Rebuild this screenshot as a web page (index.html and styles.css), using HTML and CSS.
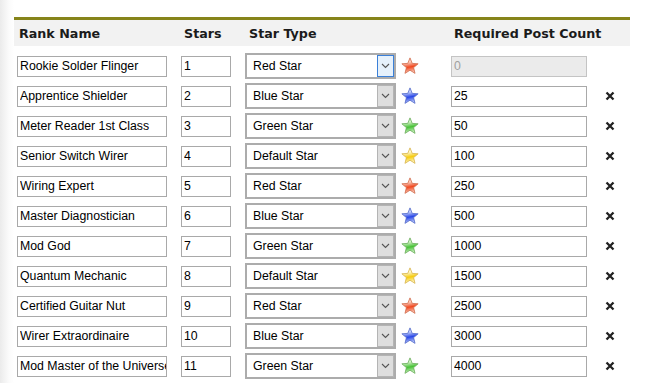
FILE: index.html
```html
<!DOCTYPE html>
<html lang="en">
<head>
  <meta charset="UTF-8" />
  <title>Ranks</title>
  <link rel="stylesheet" href="styles.css">
</head>
<body>
  <table class="ranks">
    <colgroup>
      <col class="c-name"><col class="c-stars"><col class="c-type"><col class="c-icon"><col class="c-posts"><col class="c-del">
    </colgroup>
    <thead>
      <tr>
        <th>Rank Name</th>
        <th>Stars</th>
        <th class="th-type">Star Type</th>
        <th></th>
        <th>Required Post Count</th>
        <th></th>
      </tr>
    </thead>
    <tbody id="rows"></tbody>
  </table>

  <script>
    const ranks = [
      ['Rookie Solder Flinger', 1, 'red', 0],
      ['Apprentice Shielder', 2, 'blue', 25],
      ['Meter Reader 1st Class', 3, 'green', 50],
      ['Senior Switch Wirer', 4, 'default', 100],
      ['Wiring Expert', 5, 'red', 250],
      ['Master Diagnostician', 6, 'blue', 500],
      ['Mod God', 7, 'green', 1000],
      ['Quantum Mechanic', 8, 'default', 1500],
      ['Certified Guitar Nut', 9, 'red', 2500],
      ['Wirer Extraordinaire', 10, 'blue', 3000],
      ['Mod Master of the Universe', 11, 'green', 4000]
    ];

    const types = { red: 'Red Star', blue: 'Blue Star', green: 'Green Star', default: 'Default Star' };
    const colors = {
      red: ['#fcd0c0', '#f04a22', '#d06a4a'],
      blue: ['#c4d0fb', '#2a48e8', '#5068c8'],
      green: ['#d4f4c8', '#48c238', '#68ac58'],
      default: ['#fff8d0', '#f6cc10', '#d8b448']
    };

    const rows = document.getElementById('rows');

    function star(type, i) {
      const [top, bottom, edge] = colors[type];
      return `<svg class="star" width="18" height="18" viewBox="0 0 20 20">
        <defs><linearGradient id="g${i}" x1="0.2" y1="0" x2="0.4" y2="1">
          <stop offset="0" stop-color="${top}"/><stop offset="0.3" stop-color="${top}"/><stop offset="0.62" stop-color="${bottom}"/><stop offset="1" stop-color="${top}"/>
        </linearGradient></defs>
        <polygon points="10,1 12.47,7.1 19.03,7.56 13.99,11.8 15.58,18.19 10,14.7 4.42,18.19 6.01,11.8 0.97,7.56 7.53,7.1"
          fill="url(#g${i})" stroke="${edge}" stroke-width="0.9" stroke-linejoin="round"/>
      </svg>`;
    }

    ranks.forEach(([name, stars, type, posts], i) => {
      const tr = document.createElement('tr');
      const options = Object.keys(types).map(k =>
        `<option value="${k}"${k === type ? ' selected' : ''}>${types[k]}</option>`).join('');
      tr.innerHTML = `
        <td><input class="field name" type="text" value="${name}"></td>
        <td><input class="field stars" type="text" value="${stars}"></td>
        <td>
          <span class="dropdown${i === 0 ? ' focus' : ''}">
            <select>${options}</select>
            <span class="arrow"><svg width="9" height="6" viewBox="0 0 9 6"><path d="M1 1l3.5 3.5L8 1" fill="none" stroke="#555" stroke-width="1.1"/></svg></span>
          </span>
        </td>
        <td>${star(type, i)}</td>
        <td><input class="field posts" type="text" value="${posts}"${i === 0 ? ' disabled' : ''}></td>
        <td>${i === 0 ? '' : '<svg class="del" width="10" height="10" viewBox="0 0 10 10"><path d="M1.5 1.5l7 7M8.5 1.5l-7 7" stroke="#222" stroke-width="2.3"/></svg>'}</td>
      `;
      rows.appendChild(tr);
    });
  </script>
</body>
</html>
```

FILE: styles.css
```css
body {
  margin: 0;
  padding: 17px 0 0 14px;
  background: linear-gradient(to right, #ebebeb 0, #fbfbfb 9px, #fff 14px);
  font-family: "Liberation Sans", Arial, sans-serif;
  font-size: 12.3px;
  color: #000;
}
.ranks {
  border-collapse: collapse;
  table-layout: fixed;
  width: 616px;
  border-top: 3px solid #86841a;
}
.c-name { width: 164px; }
.c-stars { width: 64px; }
.c-type { width: 156px; }
.c-icon { width: 50px; }
.c-posts { width: 142px; }
.c-del { width: 40px; }
th {
  background: #f2f2f2;
  height: 26px;
  padding: 0 0 0 6px;
  text-align: left;
  font-family: "DejaVu Sans", Verdana, sans-serif;
  font-size: 12.7px;
  font-weight: bold;
  color: #1b1b1b;
  white-space: nowrap;
}
th:first-child { padding-left: 5px; }
.th-type { padding-left: 7px; }
td {
  padding: 2px 3px;
  vertical-align: middle;
  line-height: 0;
}
tbody tr:first-child td { padding-top: 7px; }
.field {
  box-sizing: border-box;
  height: 21px;
  margin: 0;
  padding: 0 0 0 2px;
  border: 1px solid #a9a9a9;
  background: #fff;
  font-family: "Liberation Sans", Arial, sans-serif;
  font-size: 12.3px;
  color: #000;
  vertical-align: middle;
}
.field.name { width: 150px; }
.field.stars { width: 50px; }
.field.posts { width: 136px; }
.field:disabled {
  background: #ebebeb;
  border-color: #c4c4c4;
  color: #a0a0a0;
}
.dropdown {
  box-sizing: border-box;
  display: inline-flex;
  width: 151px;
  height: 26px;
  border: 2px solid #acacac;
  background: #fff;
  vertical-align: middle;
}
.dropdown select {
  flex: 1;
  min-width: 0;
  border: none;
  outline: none;
  appearance: none;
  -webkit-appearance: none;
  background: transparent;
  padding: 0 0 0 6px;
  font-family: "Liberation Sans", Arial, sans-serif;
  font-size: 12.3px;
  color: #000;
}
.arrow {
  box-sizing: border-box;
  display: flex;
  align-items: center;
  justify-content: center;
  width: 17px;
  border: 1px solid #b4b4b4;
  background: #dedede;
}
.dropdown.focus .arrow {
  border-color: #3b80d8;
  background: #e6f1fb;
}
.star { vertical-align: middle; }
td:last-child { text-align: center; }
.del { vertical-align: middle; }
```
